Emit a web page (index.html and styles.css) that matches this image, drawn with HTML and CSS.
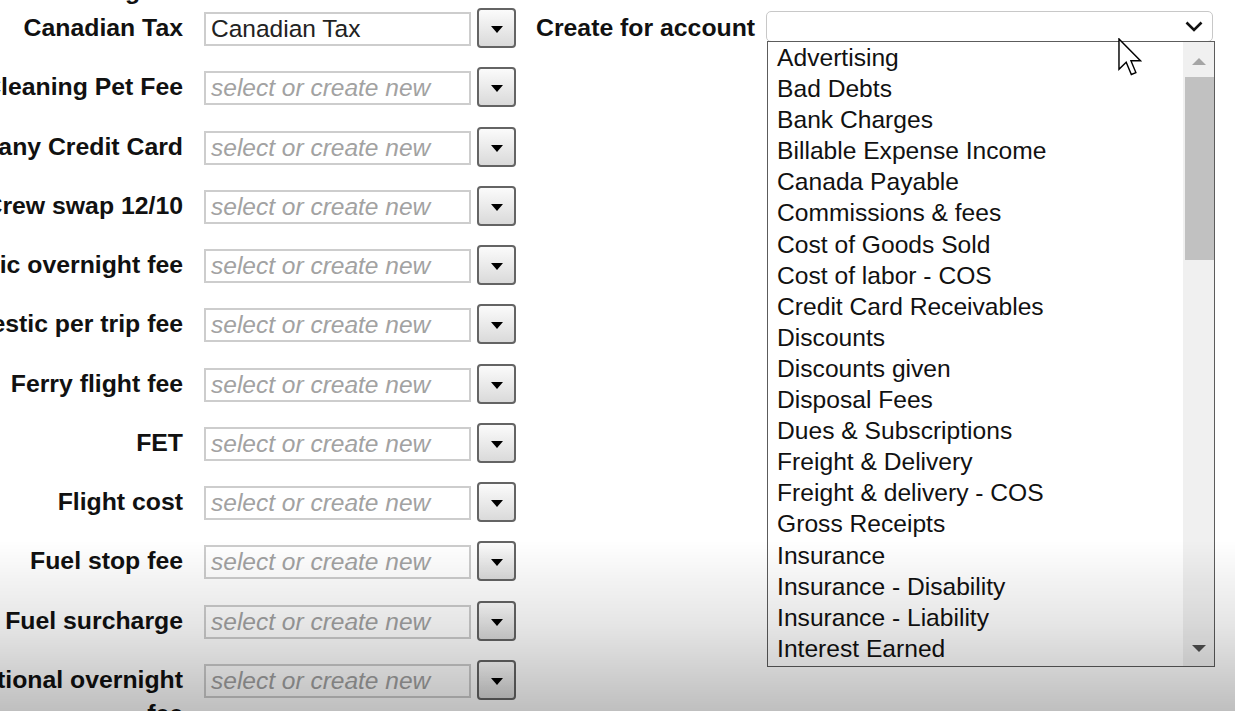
FILE: index.html
```html
<!DOCTYPE html>
<html>
<head>
<meta charset="utf-8">
<link rel="stylesheet" href="styles.css">
</head>
<body>
<div class="page">
  <div class="form">
    <div class="cut-heading">Landing fee</div>
    <div class="row"><div class="label"><span>Canadian Tax</span></div><div class="input">Canadian Tax</div><div class="btn"><i class="tri"></i></div></div>
    <div class="row"><div class="label"><span>Cleaning Pet Fee</span></div><div class="input placeholder">select or create new</div><div class="btn"><i class="tri"></i></div></div>
    <div class="row"><div class="label"><span>Company Credit Card</span></div><div class="input placeholder">select or create new</div><div class="btn"><i class="tri"></i></div></div>
    <div class="row"><div class="label"><span>Crew swap 12/10</span></div><div class="input placeholder">select or create new</div><div class="btn"><i class="tri"></i></div></div>
    <div class="row"><div class="label"><span>Domestic overnight fee</span></div><div class="input placeholder">select or create new</div><div class="btn"><i class="tri"></i></div></div>
    <div class="row"><div class="label"><span>Domestic per trip fee</span></div><div class="input placeholder">select or create new</div><div class="btn"><i class="tri"></i></div></div>
    <div class="row"><div class="label"><span>Ferry flight fee</span></div><div class="input placeholder">select or create new</div><div class="btn"><i class="tri"></i></div></div>
    <div class="row"><div class="label"><span>FET</span></div><div class="input placeholder">select or create new</div><div class="btn"><i class="tri"></i></div></div>
    <div class="row"><div class="label"><span>Flight cost</span></div><div class="input placeholder">select or create new</div><div class="btn"><i class="tri"></i></div></div>
    <div class="row"><div class="label"><span>Fuel stop fee</span></div><div class="input placeholder">select or create new</div><div class="btn"><i class="tri"></i></div></div>
    <div class="row"><div class="label"><span>Fuel surcharge</span></div><div class="input placeholder">select or create new</div><div class="btn"><i class="tri"></i></div></div>
    <div class="row"><div class="label"><span>International overnight<br>fee</span></div><div class="input placeholder">select or create new</div><div class="btn"><i class="tri"></i></div></div>
  </div>
  <div class="account">
    <div class="acc-label">Create for account</div>
    <div class="select-wrap">
      <div class="select">
        <svg class="chev" width="18" height="11" viewBox="0 0 18 11"><path d="M1.5 1.5 L9 9 L16.5 1.5" fill="none" stroke="#111" stroke-width="2.6"/></svg>
      </div>
      <div class="dropdown">
        <ul class="options">
          <li>Advertising</li>
          <li>Bad Debts</li>
          <li>Bank Charges</li>
          <li>Billable Expense Income</li>
          <li>Canada Payable</li>
          <li>Commissions &amp; fees</li>
          <li>Cost of Goods Sold</li>
          <li>Cost of labor - COS</li>
          <li>Credit Card Receivables</li>
          <li>Discounts</li>
          <li>Discounts given</li>
          <li>Disposal Fees</li>
          <li>Dues &amp; Subscriptions</li>
          <li>Freight &amp; Delivery</li>
          <li>Freight &amp; delivery - COS</li>
          <li>Gross Receipts</li>
          <li>Insurance</li>
          <li>Insurance - Disability</li>
          <li>Insurance - Liability</li>
          <li>Interest Earned</li>
          <li>Interest Expense</li>
          <li>Inventory Asset</li>
        </ul>
        <div class="scrollbar">
          <div class="sb-btn up"><i class="arr-up"></i></div>
          <div class="thumb"></div>
          <div class="track"></div>
          <div class="sb-btn down"><i class="arr-down"></i></div>
        </div>
      </div>
    </div>
  </div>
</div>
<svg class="cursor" width="24" height="38" viewBox="0 0 12.6 20"><path d="M0.5 0.5 L0.5 16.5 L4.3 12.8 L7 19.2 L9.4 18.2 L6.8 12 L11.8 12 Z" fill="#fff" stroke="#000" stroke-width="0.75" stroke-linejoin="miter"/></svg>
<div class="vignette"></div>
</body>
</html>
```

FILE: styles.css
```css
html, body {
  margin: 0;
  padding: 0;
  background: #fff;
  overflow: hidden;
  width: 1235px;
  height: 711px;
  font-family: "Liberation Sans", Arial, sans-serif;
}

.page {
  display: flex;
}

.form {
  display: flex;
  flex-direction: column;
  gap: 19.27px;
  width: 518px;
  flex: none;
}

.cut-heading {
  width: 183px;
  height: 24px;
  margin-top: -21px;
  margin-bottom: -14.27px;
  font-weight: bold;
  font-size: 24.8px;
  line-height: 24px;
  color: #111;
  text-align: right;
  white-space: nowrap;
}

.row {
  display: flex;
  align-items: flex-start;
  height: 40px;
}

.label {
  width: 183px;
  flex: none;
  display: flex;
  justify-content: flex-end;
  padding-top: 3px;
  font-weight: bold;
  font-size: 24.8px;
  line-height: 34px;
  color: #111;
  white-space: nowrap;
  text-align: right;
}

.label span {
  display: block;
  flex: none;
}

.input {
  margin-left: 21px;
  margin-top: 4px;
  width: 267px;
  height: 34px;
  box-sizing: border-box;
  border: 2px solid #cdcdcd;
  padding-left: 5px;
  font-size: 24.5px;
  line-height: 30px;
  color: #222;
  background: #fff;
  white-space: nowrap;
  overflow: hidden;
}

.input.placeholder {
  color: #a2a2a2;
  font-style: italic;
}

.btn {
  margin-left: 6px;
  width: 39px;
  height: 40px;
  box-sizing: border-box;
  border: 2px solid #646464;
  border-radius: 4px;
  background: linear-gradient(#fbfbfb, #dadada);
  display: flex;
  align-items: center;
  justify-content: center;
}

.tri {
  display: block;
  margin-top: 3px;
  width: 0;
  height: 0;
  border-left: 6px solid transparent;
  border-right: 6px solid transparent;
  border-top: 7px solid #000;
}

.account {
  margin-left: 18px;
  padding-top: 8px;
  display: flex;
  align-items: flex-start;
}

.acc-label {
  font-weight: bold;
  font-size: 24.8px;
  line-height: 40px;
  color: #111;
  white-space: nowrap;
}

.select-wrap {
  position: relative;
  margin-left: 11px;
  margin-top: 3px;
  width: 447px;
}

.select {
  height: 31px;
  box-sizing: border-box;
  border: 1.5px solid #c8c8c8;
  border-radius: 5px;
  background: #fff;
  display: flex;
  align-items: center;
  justify-content: flex-end;
  padding-right: 9px;
}

.chev {
  display: block;
}

.dropdown {
  position: absolute;
  top: 30px;
  left: 1px;
  width: 448px;
  height: 626px;
  box-sizing: border-box;
  border: 1px solid #5c5c5c;
  background: #fff;
  display: flex;
  overflow: hidden;
}

.options {
  flex: 1;
  margin: 0;
  padding: 0;
  list-style: none;
  overflow: hidden;
}

.options li {
  height: 31.1px;
  line-height: 31.1px;
  padding-left: 9px;
  font-size: 24.6px;
  color: #111;
  white-space: nowrap;
}

.scrollbar {
  width: 31px;
  flex: none;
  background: #f0f0f0;
  display: flex;
  flex-direction: column;
}

.sb-btn {
  height: 35px;
  flex: none;
  display: flex;
  align-items: center;
  justify-content: center;
}

.sb-btn.up {
  padding-top: 4px;
  box-sizing: border-box;
}

.arr-up {
  display: block;
  width: 0;
  height: 0;
  border-left: 7px solid transparent;
  border-right: 7px solid transparent;
  border-bottom: 7px solid #a5a5a5;
}

.arr-down {
  display: block;
  width: 0;
  height: 0;
  border-left: 7px solid transparent;
  border-right: 7px solid transparent;
  border-top: 7px solid #505050;
}

.thumb {
  height: 183px;
  flex: none;
  margin-left: 2px;
  background: #c1c1c1;
}

.track {
  flex: 1;
}

.cursor {
  position: absolute;
  left: 1118px;
  top: 38px;
}

.vignette {
  position: fixed;
  inset: 0;
  pointer-events: none;
  background: linear-gradient(to bottom, rgba(0, 0, 0, 0) 0%, rgba(0, 0, 0, 0) 76%, rgba(0, 0, 0, 0.1) 88%, rgba(0, 0, 0, 0.25) 100%);
}
```
